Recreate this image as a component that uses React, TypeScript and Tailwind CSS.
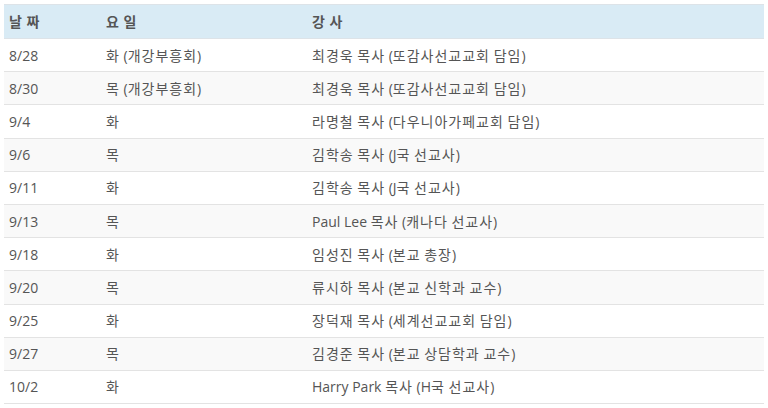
const rows: [string, string, string][] = [
  ['8/28', '화 (개강부흥회)', '최경욱 목사 (또감사선교교회 담임)'],
  ['8/30', '목 (개강부흥회)', '최경욱 목사 (또감사선교교회 담임)'],
  ['9/4', '화', '라명철 목사 (다우니아가페교회 담임)'],
  ['9/6', '목', '김학송 목사 (J국 선교사)'],
  ['9/11', '화', '김학송 목사 (J국 선교사)'],
  ['9/13', '목', 'Paul Lee 목사 (캐나다 선교사)'],
  ['9/18', '화', '임성진 목사 (본교 총장)'],
  ['9/20', '목', '류시하 목사 (본교 신학과 교수)'],
  ['9/25', '화', '장덕재 목사 (세계선교교회 담임)'],
  ['9/27', '목', '김경준 목사 (본교 상담학과 교수)'],
  ['10/2', '화', 'Harry Park 목사 (H국 선교사)'],
];

// Hangul in the original renders a touch wider than Noto CJK — pad those runs.
function Ko({ text }: { text: string }) {
  return (
    <>
      {text.split(/([\uAC00-\uD7A3]+)/).map((part, i) =>
        /[\uAC00-\uD7A3]/.test(part) ? (
          <span key={i} className="tracking-[1px]">
            {part}
          </span>
        ) : (
          part
        ),
      )}
    </>
  );
}

export default function App() {
  return (
    <div
      className="h-[408px] w-[768px] overflow-hidden bg-white pl-[4px] pt-[4px] text-[14px] text-[#555]"
      style={{ fontFamily: '"Open Sans", "Noto Sans CJK KR", sans-serif' }}
    >
      <table className="w-[760px] table-fixed border-collapse">
        <colgroup>
          <col className="w-[97px]" />
          <col className="w-[206px]" />
          <col />
        </colgroup>
        <thead>
          <tr className="h-[34px] border-y border-[#dde3e8] bg-[#d9ebf5]">
            <th className="pl-[5px] text-left font-bold">
              <Ko text="날 짜" />
            </th>
            <th className="pl-[5px] text-left font-bold">
              <Ko text="요 일" />
            </th>
            <th className="pl-[5px] text-left font-bold">
              <Ko text="강 사" />
            </th>
          </tr>
        </thead>
        <tbody>
          {rows.map(([date, day, speaker], i) => (
            <tr
              key={date}
              className={`h-[33.2px] border-b border-[#e3e3e3] ${i % 2 === 1 ? 'bg-[#f9f9f9]' : 'bg-white'}`}
            >
              <td className="pl-[5px]">{date}</td>
              <td className="pl-[5px]">
                <Ko text={day} />
              </td>
              <td className="pl-[5px]">
                <Ko text={speaker} />
              </td>
            </tr>
          ))}
        </tbody>
      </table>
    </div>
  );
}
